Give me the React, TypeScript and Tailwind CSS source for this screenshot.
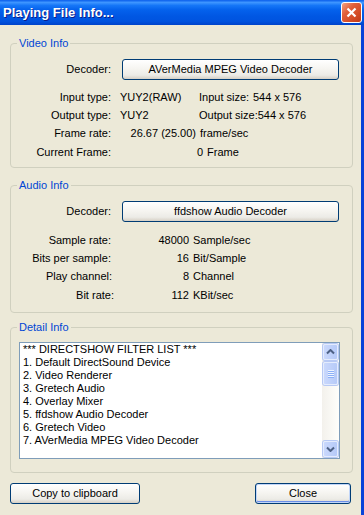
import React from "react";

const XpButton = ({
  label,
  className = "",
  isDefault = false,
}: {
  label: string;
  className?: string;
  isDefault?: boolean;
}) => (
  <button
    className={`h-[21px] rounded-[3px] border border-[#003C74] bg-[linear-gradient(to_bottom,#FFFFFF_0%,#F6F5F1_45%,#ECEBE6_80%,#D6D0C5_100%)] text-[11px] text-black ${
      isDefault ? "shadow-[inset_0_0_0_1px_#C2D6F8,inset_0_-1px_0_1px_#6B8EE8]" : ""
    } ${className}`}
  >
    {label}
  </button>
);

const Group = ({
  title,
  height,
  children,
}: {
  title: string;
  height: string;
  children: React.ReactNode;
}) => (
  <fieldset className={`border border-[#D0D0BF] rounded-[4px] ${height}`}>
    <legend className="ml-[6px] px-[2px] leading-[14px] text-[#0046D5]">{title}</legend>
    {children}
  </fieldset>
);

const Label = ({ text, w = "w-[100px]" }: { text: string; w?: string }) => (
  <div className={`${w} shrink-0 text-right`}>{text}</div>
);

const ScrollBtn = ({ down = false }: { down?: boolean }) => (
  <div className="mx-[1px] h-[16px] rounded-[2px] border border-[#E4ECFD] bg-[linear-gradient(to_right,#C9D8FC,#B6CAF8)] flex items-center justify-center shadow-[0_0_0_1px_#B7C9F4]">
    <svg width="9" height="6" viewBox="0 0 9 6">
      <path
        d={down ? "M1 1.5 L4.5 5 L8 1.5" : "M1 4.5 L4.5 1 L8 4.5"}
        fill="none"
        stroke="#4D6185"
        strokeWidth="2"
      />
    </svg>
  </div>
);

export default function App() {
  const filters = [
    "*** DIRECTSHOW FILTER LIST ***",
    "1. Default DirectSound Device",
    "2. Video Renderer",
    "3. Gretech Audio",
    "4. Overlay Mixer",
    "5. ffdshow Audio Decoder",
    "6. Gretech Video",
    "7. AVerMedia MPEG Video Decoder",
  ];

  return (
    <div className="w-[364px] h-[515px] flex flex-col overflow-hidden font-['Liberation_Sans',Arial,sans-serif] text-[11px] text-black">
      {/* title bar */}
      <div className="h-[25px] shrink-0 flex items-center justify-between pl-[3px] pr-[2px] bg-[linear-gradient(to_bottom,#0A5EEB_0%,#3D95FF_10%,#1576F7_22%,#0461EC_40%,#0057E3_65%,#0053DF_85%,#0043CA_100%)]">
        <span className="text-[13px] font-bold text-white [text-shadow:1px_1px_0_#0A1E8C]">
          Playing File Info...
        </span>
        <div className="w-[21px] h-[21px] rounded-[3px] border border-white bg-[linear-gradient(135deg,#F2A285_0%,#E2603A_35%,#D34B25_70%,#C03A18_100%)] flex items-center justify-center">
          <svg width="11" height="11" viewBox="0 0 11 11">
            <path d="M1.5 1.5 L9.5 9.5 M9.5 1.5 L1.5 9.5" stroke="white" strokeWidth="2.2" />
          </svg>
        </div>
      </div>

      <div className="flex-1 flex flex-col bg-[#ECE9D8] border-r-[3px] border-[#0842D9] pl-[10px] pr-[8px]">
        {/* Video */}
        <div className="mt-[11px]">
          <Group title="Video Info" height="h-[132px]">
            <div className="mt-[9px] h-[20px] flex items-center">
              <Label text="Decoder:" />
              <XpButton label="AVerMedia MPEG Video Decoder" className="ml-[11px] w-[217px] h-[20px]" />
            </div>
            <div className="mt-[9px] h-[19px] flex items-center">
              <Label text="Input type:" />
              <div className="w-[88px] pl-[9px]">YUY2(RAW)</div>
              <div className="w-[54px]">Input size:</div>
              <div>544 x 576</div>
            </div>
            <div className="h-[17px] flex items-center">
              <Label text="Output type:" />
              <div className="w-[88px] pl-[9px]">YUY2</div>
              <div>Output size:544 x 576</div>
            </div>
            <div className="h-[19px] flex items-center">
              <Label text="Frame rate:" />
              <div className="w-[85px] text-right">26.67 (25.00)</div>
              <div className="ml-[4px]">frame/sec</div>
            </div>
            <div className="h-[18px] flex items-center">
              <Label text="Current Frame:" />
              <div className="w-[92px] text-right">0</div>
              <div className="ml-[4px]">Frame</div>
            </div>
          </Group>
        </div>

        {/* Audio */}
        <div className="mt-[10px]">
          <Group title="Audio Info" height="h-[135px]">
            <div className="mt-[9px] h-[20px] flex items-center">
              <Label text="Decoder:" />
              <XpButton label="ffdshow Audio Decoder" className="ml-[11px] w-[217px] h-[20px]" />
            </div>
            <div className="mt-[10px] h-[18px] flex items-center">
              <Label text="Sample rate:" />
              <div className="w-[78px] text-right">48000</div>
              <div className="ml-[4px]">Sample/sec</div>
            </div>
            <div className="h-[18px] flex items-center">
              <Label text="Bits per sample:" />
              <div className="w-[78px] text-right">16</div>
              <div className="ml-[4px]">Bit/Sample</div>
            </div>
            <div className="h-[18px] flex items-center">
              <Label text="Play channel:" w="w-[101px]" />
              <div className="w-[77px] text-right">8</div>
              <div className="ml-[4px]">Channel</div>
            </div>
            <div className="mt-[1px] h-[18px] flex items-center">
              <Label text="Bit rate:" w="w-[103px]" />
              <div className="w-[75px] text-right">112</div>
              <div className="ml-[4px]">KBit/sec</div>
            </div>
          </Group>
        </div>

        {/* Detail */}
        <div className="mt-[7px]">
          <Group title="Detail Info" height="h-[153px]">
            <div className="mt-[8px] ml-[8px] w-[321px] h-[117px] border border-[#7F9DB9] bg-white flex">
              <div className="flex-1 pl-[3px] leading-[13px] overflow-hidden whitespace-nowrap">
                {filters.map((f) => (
                  <div key={f}>{f}</div>
                ))}
              </div>
              <div className="w-[17px] flex flex-col py-[1px] bg-[linear-gradient(to_right,#F3F1EC,#FEFEFB)]">
                <ScrollBtn />
                <div className="mt-[2px] mx-[1px] h-[23px] rounded-[2px] border border-[#E4ECFD] bg-[linear-gradient(to_right,#C9D8FC,#B6CAF8)] shadow-[0_0_0_1px_#B7C9F4] flex flex-col items-center justify-center gap-[1px]">
                  {[0, 1, 2, 3].map((i) => (
                    <div key={i} className="w-[6px] h-[1px] bg-[#EEF4FE] shadow-[0_1px_0_#8CB0F8]" />
                  ))}
                </div>
                <div className="flex-1" />
                <ScrollBtn down />
              </div>
            </div>
          </Group>
        </div>

        {/* buttons */}
        <div className="mt-[10px] flex justify-between pr-[2px]">
          <XpButton label="Copy to clipboard" className="w-[130px]" />
          <XpButton label="Close" className="w-[96px]" isDefault />
        </div>
      </div>
    </div>
  );
}
